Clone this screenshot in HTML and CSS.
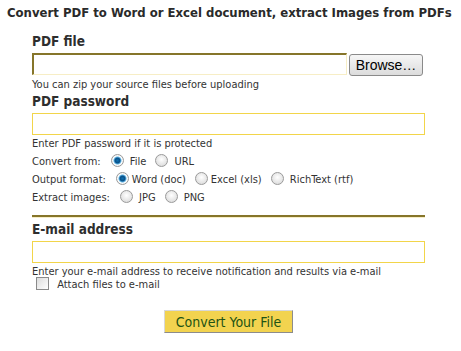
FILE: index.html
```html
<!DOCTYPE html>
<html lang="en">
<head>
    <meta charset="UTF-8">
    <title>PDF to Word converter</title>
    <link rel="stylesheet" href="styles.css">
</head>
<body>
    <h1 class="title">Convert PDF to Word or Excel document, extract Images from PDFs</h1>

    <form class="converter">
        <label class="field-label">PDF file</label>
        <div class="file-row">
            <input type="text" class="file-input">
            <button type="button" class="browse">Browse…</button>
        </div>
        <div class="hint">You can zip your source files before uploading</div>

        <label class="field-label">PDF password</label>
        <input type="password" class="text-input">
        <div class="hint">Enter PDF password if it is protected</div>

        <div class="options">
            <div class="option-row">
                <span class="option-name">Convert from:</span>
                <label><input type="radio" name="from" checked> File</label>
                <label><input type="radio" name="from"> URL</label>
            </div>
            <div class="option-row">
                <span class="option-name">Output format:</span>
                <label><input type="radio" name="format" checked>Word (doc)</label>
                <label><input type="radio" name="format">Excel (xls)</label>
                <label><input type="radio" name="format"> RichText (rtf)</label>
            </div>
            <div class="option-row">
                <span class="option-name">Extract images:</span>
                <label><input type="radio" name="images"> JPG</label>
                <label><input type="radio" name="images"> PNG</label>
            </div>
        </div>

        <hr class="divider">

        <label class="field-label">E-mail address</label>
        <input type="text" class="text-input">
        <div class="hint">Enter your e-mail address to receive notification and results via e-mail</div>
        <label class="attach"><input type="checkbox"> Attach files to e-mail</label>

        <div class="submit-row">
            <button type="button" class="submit">Convert Your File</button>
        </div>
    </form>
</body>
</html>
```

FILE: styles.css
```css
body {
    margin: 0;
    padding: 0;
    font-family: "DejaVu Sans Condensed", "DejaVu Sans", Verdana, sans-serif;
    background: #fff;
    color: #333;
}

.title {
    margin: 0;
    padding: 4px 0 0 7px;
    font-size: 13px;
    line-height: 18px;
    white-space: nowrap;
    color: #2a2a2a;
}

.converter {
    width: 393px;
    margin-left: 32px;
    padding-top: 11px;
}

.field-label {
    display: block;
    font-size: 13.5px;
    font-weight: bold;
    line-height: 16px;
    color: #2e2e2e;
    margin-bottom: 4px;
}

.file-row {
    display: flex;
    gap: 2px;
    align-items: flex-start;
}

.file-input {
    box-sizing: border-box;
    width: 315px;
    height: 22px;
    margin: 0;
    border-style: solid;
    border-width: 2px 1px 1px 2px;
    border-color: #86752a #f7eec6 #f7eec6 #86752a;
    background: #fff;
}

.browse {
    box-sizing: border-box;
    width: 74px;
    height: 22px;
    margin-top: 1px;
    padding: 0;
    font-family: "Liberation Sans", Arial, sans-serif;
    font-size: 14px;
    color: #000;
    border: 1px solid #8a8a8a;
    border-radius: 3px;
    background: linear-gradient(#f6f6f6, #dcdcdc);
}

.hint {
    font-size: 11px;
    line-height: 13px;
    color: #333;
    margin: 2px 0 2px;
}

.text-input {
    display: block;
    box-sizing: border-box;
    width: 393px;
    height: 22px;
    margin: 0;
    border: 1px solid #f2d54a;
    background: #fff;
}

.option-row {
    display: flex;
    align-items: center;
    height: 18px;
    font-size: 11px;
    color: #333;
}

.option-name {
    margin-right: 10px;
}

.option-row label {
    margin-right: 9px;
}

input[type="radio"] {
    appearance: none;
    box-sizing: border-box;
    width: 13px;
    height: 13px;
    margin: 0 3px 0 0;
    vertical-align: -2px;
    border: 1px solid #9a9a9a;
    border-radius: 50%;
    background: radial-gradient(circle at 50% 40%, #ffffff, #d4d4d4);
}

input[type="radio"]:checked {
    background: radial-gradient(circle, #0b6fb0 0, #0a4f86 2.5px, #5fb3e3 3.5px, #ffffff 4.5px, #d4d4d4 100%);
}

.divider {
    margin: 9px 0 3px;
    border: 0;
    border-top: 2px solid #86752a;
    border-bottom: 1px solid #f7eec6;
    height: 0;
}

.attach {
    display: block;
    margin: -3px 0 0 4px;
    font-size: 11px;
    line-height: 13px;
    color: #333;
}

input[type="checkbox"] {
    appearance: none;
    box-sizing: border-box;
    width: 13px;
    height: 13px;
    margin: 0 5px 0 0;
    vertical-align: -2px;
    border: 1px solid #8a8a8a;
    background: linear-gradient(135deg, #dcdcdc, #ffffff);
}

.submit-row {
    display: flex;
    justify-content: center;
    margin-top: 19px;
}

.submit {
    box-sizing: border-box;
    width: 129px;
    height: 23px;
    padding: 0;
    font-family: "DejaVu Sans Condensed", "DejaVu Sans", Verdana, sans-serif;
    font-size: 14px;
    color: #1e5314;
    background: #f2d34f;
    border: 1px solid;
    border-color: #d8d8d8 #8c8c8c #8c8c8c #d8d8d8;
}
```
